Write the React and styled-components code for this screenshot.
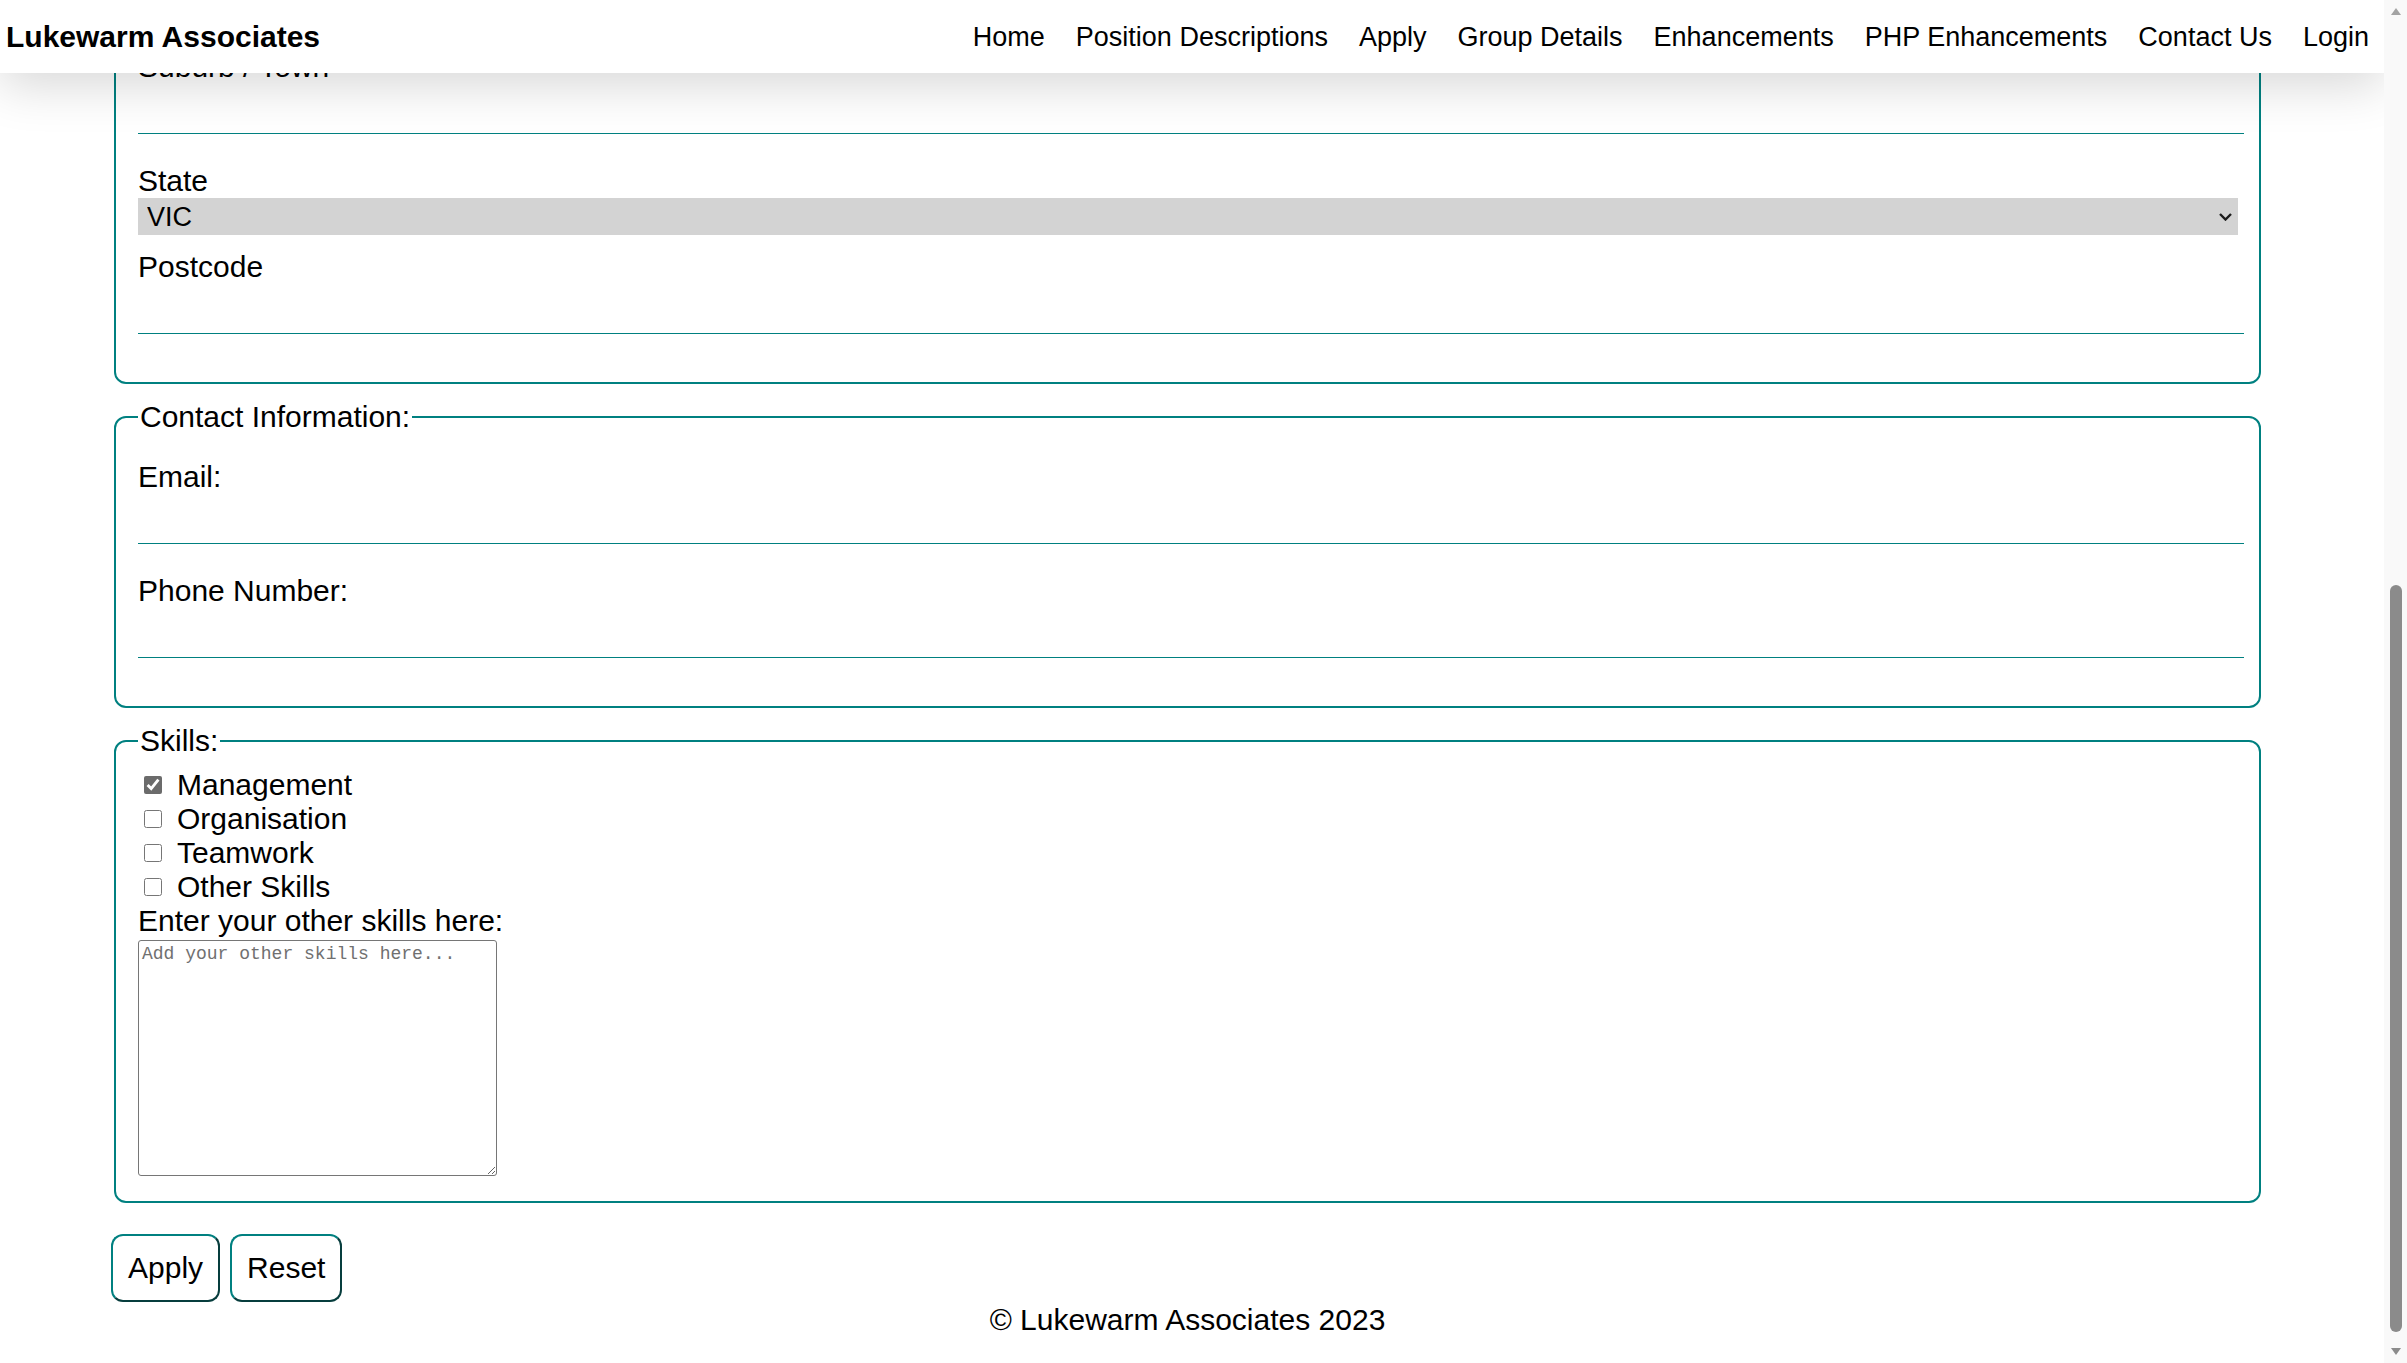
import React from 'react'
import styled, { createGlobalStyle } from 'styled-components'

const GlobalStyle = createGlobalStyle`
    html, body {
        margin: 0;
        padding: 0;
        height: 100%;
        overflow: hidden;
        background: #fff;
    }
    body {
        font-family: "Liberation Sans", Arial, sans-serif;
        font-size: 30px;
        line-height: 34px;
        color: #000;
    }
    *, *::before, *::after {
        box-sizing: border-box;
    }
`

const Page = styled.div`
    display: flex;
    width: 100vw;
    height: 100vh;
`

const Viewport = styled.div`
    flex: 1;
    min-width: 0;
    position: relative;
    overflow: hidden;
    display: flex;
    flex-direction: column;
    justify-content: flex-end;
`

const Header = styled.header`
    position: absolute;
    top: 0;
    left: 0;
    right: 0;
    height: 73px;
    z-index: 2;
    display: flex;
    align-items: center;
    justify-content: space-between;
    padding: 0 15px 0 6px;
    background: #fff;
    box-shadow: 0 12px 50px rgba(0, 0, 0, 0.16);
`

const Brand = styled.div`
    font-size: 30px;
    font-weight: 700;
`

const Nav = styled.nav`
    display: flex;
    gap: 31px;
    font-size: 27px;
`

const NavLink = styled.a`
    color: #000;
    text-decoration: none;
`

const Main = styled.main`
    flex-shrink: 0;
    margin: 0 120px 0 111px;
`

const Fieldset = styled.fieldset`
    margin: 0 3px 16px;
    padding: 10px 15px 25px 22px;
    border: 2px solid #008080;
    border-radius: 12px;
    min-width: 0;
`

const Legend = styled.legend`
    padding: 0 2px;
    font-size: 30px;
    line-height: 34px;
`

// spacing above a label depends on what sits before it
const labelGap = { input: '30px', select: '15px', none: '0' }

const Label = styled.label`
    display: block;
    margin-top: ${({ $after = 'input' }) => labelGap[$after]};

    &:first-of-type {
        margin-top: 16px;
    }
`

const Input = styled.input`
    display: block;
    width: 100%;
    height: 50px;
    margin: 0;
    padding: 0 4px;
    border: none;
    border-bottom: 1px solid #008080;
    background: transparent;
    font: inherit;
    outline: none;

    &:last-child {
        margin-bottom: 23px;
    }
`

const SelectWrap = styled.div`
    position: relative;
    width: calc(100% - 6px);
`

const Select = styled.select`
    display: block;
    width: 100%;
    height: 37px;
    padding: 0 30px 0 9px;
    border: none;
    border-radius: 0;
    background: #d3d3d3;
    color: #000;
    font-family: "Liberation Sans", Arial, sans-serif;
    font-size: 27px;
    appearance: none;
    outline: none;
`

const Chevron = styled.svg`
    position: absolute;
    right: 6px;
    top: 50%;
    transform: translateY(-50%);
    pointer-events: none;
`

const CheckRow = styled.label`
    display: flex;
    align-items: center;
    height: 34px;
`

const Checkbox = styled.input`
    width: 18px;
    height: 18px;
    margin: 0 15px 0 6px;
    accent-color: #6b6b6b;
`

const TextArea = styled.textarea`
    display: block;
    width: 359px;
    height: 236px;
    margin-top: 2px;
    padding: 3px;
    border: 1px solid #767676;
    border-radius: 3px;
    font-family: "Liberation Mono", "DejaVu Sans Mono", monospace;
    font-size: 18px;
    line-height: 20px;

    &::placeholder {
        color: #707070;
    }
`

const ButtonRow = styled.div`
    display: flex;
    gap: 10px;
    margin-top: 31px;
`

const Button = styled.button`
    padding: 15px;
    background: #fff;
    color: #000;
    font-family: "Liberation Sans", Arial, sans-serif;
    font-size: 30px;
    line-height: 34px;
    border: 2px solid;
    border-color: #008080 #073d3d #073d3d #008080;
    border-radius: 12px;
    cursor: pointer;
`

const Footer = styled.footer`
    padding: 1px 0 26px;
    text-align: center;
`

const Scrollbar = styled.div`
    width: 23px;
    flex-shrink: 0;
    display: flex;
    flex-direction: column;
    align-items: center;
    background: #f9f9f9;
`

const ScrollArrow = styled.div`
    height: 23px;
    display: flex;
    align-items: center;
    justify-content: center;
`

const ScrollTrack = styled.div`
    flex: 1;
    display: flex;
    flex-direction: column;
    justify-content: flex-end;
    padding-bottom: 8px;
`

const ScrollThumb = styled.div`
    width: 12px;
    height: 747px;
    border-radius: 6px;
    background: #8b8b8b;
`

const navItems = ['Home', 'Position Descriptions', 'Apply', 'Group Details', 'Enhancements', 'PHP Enhancements', 'Contact Us', 'Login']
const states = ['ACT', 'NSW', 'NT', 'QLD', 'SA', 'TAS', 'VIC', 'WA']
const skills = [
    { id: 'management', label: 'Management', checked: true },
    { id: 'organisation', label: 'Organisation' },
    { id: 'teamwork', label: 'Teamwork' },
    { id: 'other', label: 'Other Skills' },
]

const App = () => {
    return (
        <Page>
            <GlobalStyle />
            <Viewport>
                <Header>
                    <Brand>Lukewarm Associates</Brand>
                    <Nav>
                        {navItems.map((item) => (
                            <NavLink key={item} href="#">{item}</NavLink>
                        ))}
                    </Nav>
                </Header>

                <Main>
                    <form onSubmit={(e) => e.preventDefault()}>
                        <Fieldset>
                            <Label htmlFor="suburb">Suburb / Town</Label>
                            <Input id="suburb" type="text" />
                            <Label htmlFor="state">State</Label>
                            <SelectWrap>
                                <Select id="state" defaultValue="VIC">
                                    {states.map((s) => (
                                        <option key={s} value={s}>{s}</option>
                                    ))}
                                </Select>
                                <Chevron width="13" height="8" viewBox="0 0 13 8">
                                    <path d="M1 1 L6.5 6.5 L12 1" fill="none" stroke="#1c1c1c" strokeWidth="2.4" />
                                </Chevron>
                            </SelectWrap>
                            <Label $after="select" htmlFor="postcode">Postcode</Label>
                            <Input id="postcode" type="text" />
                        </Fieldset>

                        <Fieldset>
                            <Legend>Contact Information:</Legend>
                            <Label htmlFor="email">Email:</Label>
                            <Input id="email" type="email" />
                            <Label htmlFor="phone">Phone Number:</Label>
                            <Input id="phone" type="tel" />
                        </Fieldset>

                        <Fieldset>
                            <Legend>Skills:</Legend>
                            {skills.map((skill) => (
                                <CheckRow key={skill.id}>
                                    <Checkbox type="checkbox" defaultChecked={skill.checked} />
                                    {skill.label}
                                </CheckRow>
                            ))}
                            <Label $after="none" htmlFor="otherskills">Enter your other skills here:</Label>
                            <TextArea id="otherskills" placeholder="Add your other skills here..." />
                        </Fieldset>

                        <ButtonRow>
                            <Button type="submit">Apply</Button>
                            <Button type="reset">Reset</Button>
                        </ButtonRow>
                    </form>
                    <Footer>© Lukewarm Associates 2023</Footer>
                </Main>
            </Viewport>

            <Scrollbar>
                <ScrollArrow>
                    <svg width="12" height="9" viewBox="0 0 12 9">
                        <polygon points="6,1 11,8 1,8" fill="#a3a3a3" />
                    </svg>
                </ScrollArrow>
                <ScrollTrack>
                    <ScrollThumb />
                </ScrollTrack>
                <ScrollArrow>
                    <svg width="12" height="9" viewBox="0 0 12 9">
                        <polygon points="1,1 11,1 6,8" fill="#8b8b8b" />
                    </svg>
                </ScrollArrow>
            </Scrollbar>
        </Page>
    )
}

export default App
